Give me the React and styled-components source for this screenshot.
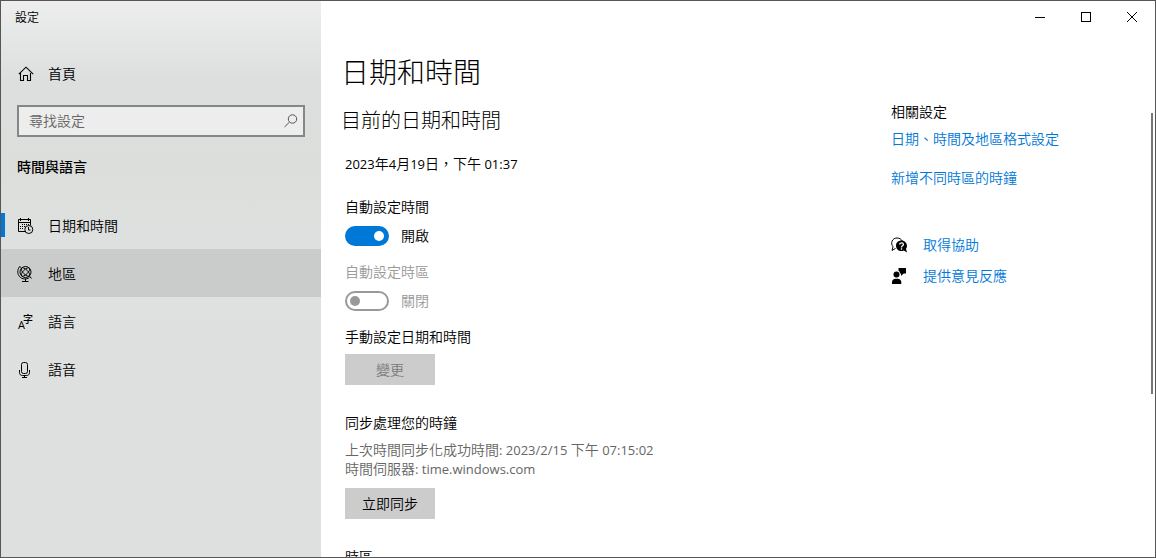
import React from "react";
import styled, { createGlobalStyle } from "styled-components";

const GlobalStyle = createGlobalStyle`
  *, *::before, *::after { box-sizing: border-box; }
  body {
    margin: 0;
    background: #fff;
    color: #000;
    font-family: "Open Sans", "Noto Sans CJK TC", sans-serif;
    font-size: 14px;
    line-height: 20px;
    font-weight: 350;
  }
  h1, h2, h3, p { margin: 0; font-weight: inherit; }
  button, input { font: inherit; color: inherit; }
  a { color: inherit; text-decoration: none; }
`;

const Window = styled.div`
  display: flex;
  height: 100vh;
  overflow: hidden;
  border: 1px solid #565656;
`;

const Sidebar = styled.aside`
  flex: 0 0 320px;
  background: linear-gradient(#eeeeee 0, #e6e7e7 32px, #dddfde 80px, #dcdedc 170px, #dfe1e0 260px, #dee0df 100%);
`;

const AppTitle = styled.div`
  padding: 7px 14px;
  height: 32px;
  font-size: 12px;
`;

const SidebarLink = styled.a`
  position: relative;
  display: flex;
  align-items: center;
  gap: 15px;
  height: 48px;
  padding: 1px 0 0 16px;
  background: ${(p) => (p.$hovered ? "rgba(0, 0, 0, 0.09)" : "transparent")};

  &::before {
    content: "";
    position: absolute;
    top: 12px;
    left: 0;
    width: 4px;
    height: 24px;
    background: ${(p) => (p.$current ? "#0078d7" : "transparent")};
  }
`;

const HomeRow = styled.div`
  margin-top: 16px;
`;

const SearchBox = styled.label`
  display: flex;
  align-items: center;
  height: 32px;
  margin: 8px 16px 20px;
  padding: 0 4px 0 10px;
  border: 2px solid #858686;
  background: #ededed;
`;

const SearchInput = styled.input`
  flex: 1;
  min-width: 0;
  padding: 0;
  border: 0;
  outline: 0;
  background: transparent;
  &::placeholder { color: #666; opacity: 1; }
`;

const SectionName = styled.h2`
  padding: 0 16px;
  margin-bottom: 24px;
  font-size: 14px;
  font-weight: 500;
`;

const Main = styled.main`
  position: relative;
  flex: 1;
  min-width: 0;
  overflow: hidden;
`;

const WindowControls = styled.div`
  display: flex;
  justify-content: flex-end;
  height: 32px;
`;

const WindowButton = styled.button`
  display: grid;
  place-items: center;
  width: 46px;
  padding: 0;
  border: 0;
  background: transparent;
`;

const Columns = styled.div`
  display: flex;
  padding-left: 24px;
`;

const Settings = styled.div`
  flex: 1;
  min-width: 0;
`;

const PageTitle = styled.h1`
  margin: 19px 0 15px -4px;
  font-size: 28px;
  line-height: 40px;
  font-weight: 300;
`;

const GroupTitle = styled.h2`
  margin: 0 0 19px -4px;
  font-size: 20px;
  line-height: 28px;
  font-weight: 300;
`;

const Latin = styled.span`
  font-size: 13px;
  line-height: 1;
  font-weight: 400;
`;

const Field = styled.div`
  margin-top: ${(p) => p.$gap}px;
`;

const FieldLabel = styled.label`
  display: block;
  margin-bottom: 9px;
  color: ${(p) => (p.$disabled ? "#999" : "#000")};
`;

const FieldTitle = styled.h3`
  margin-bottom: 7px;
  font-size: 14px;
`;

const ToggleRow = styled.div`
  display: flex;
  align-items: center;
  gap: 12px;
  color: ${(p) => (p.$disabled ? "#999" : "#000")};
`;

const Toggle = styled.input`
  appearance: none;
  display: flex;
  align-items: center;
  width: 44px;
  height: 20px;
  margin: 0;
  padding: 0 3px;
  border: 2px solid #0078d7;
  border-radius: 10px;
  background: #0078d7;

  &::before {
    content: "";
    width: 10px;
    height: 10px;
    margin-left: auto;
    border-radius: 50%;
    background: #fff;
  }
  &:not(:checked) {
    border-color: #999;
    background: #fff;
  }
  &:not(:checked)::before {
    margin-left: 0;
    background: #999;
  }
`;

const PushButton = styled.button`
  display: block;
  width: 90px;
  height: 31px;
  padding: 0;
  border: 0;
  background: #ccc;
  &:disabled { color: #7a7a7a; }
`;

const SyncInfo = styled.p`
  margin-bottom: 10px;
  line-height: 19px;
  color: #666;
`;

const Related = styled.aside`
  flex: 0 0 264px;
  padding-top: 69px;
`;

const RelatedTitle = styled.h3`
  margin-bottom: 7px;
  font-size: 14px;
`;

const RelatedLink = styled.a`
  display: block;
  margin-bottom: 19px;
  color: #0078d7;
`;

const SupportLinks = styled.div`
  display: grid;
  gap: 11px;
  margin-top: 47px;
`;

const SupportLink = styled.a`
  display: flex;
  align-items: center;
  gap: 16px;
  color: #0078d7;
  svg { color: #000; }
`;

const ScrollThumb = styled.div`
  position: absolute;
  top: 112px;
  right: 2px;
  width: 2px;
  height: 50.4vh;
  background: #767676;
`;

const Svg = styled.svg`
  display: block;
  flex: none;
  overflow: visible;
`;

const Icon = ({ children, size = 16 }) => (
  <Svg width={size} height={size} viewBox={`0 0 ${size} ${size}`} fill="none" stroke="currentColor" aria-hidden="true">
    {children}
  </Svg>
);

const HomeIcon = () => (
  <Icon>
    <path d="M1.8 8.2 9 1.2l7.2 7M3.5 7v7.500h3V9.500h4v5h3V7" strokeWidth="1.1" />
  </Icon>
);

const SearchIcon = () => (
  <Icon>
    <circle cx="9.5" cy="6" r="4.2" stroke="#555" />
    <path d="M6.4 9.2 1.5 14" stroke="#555" />
  </Icon>
);

const CalendarIcon = () => (
  <Icon>
    <path d="M8 13.5H1.5v-12h12v6M1.5 4.5h12M3.5 0v3M11.500 0v3" />
    <path d="M5 6.5h1M7 6.500h1M9 6.500h1M11 6.500h1M3 8.500h1M5 8.500h1M7 8.500h1M3 10.500h1M5 10.500h1" />
    <circle cx="11.800" cy="11.500" r="4" />
    <path d="M11.5 9v3h2" />
  </Icon>
);

const GlobeIcon = () => (
  <Icon>
    <circle cx="8.5" cy="6" r="5.500" />
    <g strokeWidth="0.900" transform="rotate(-45 8.500 6)">
      <ellipse cx="8.500" cy="6" rx="2.300" ry="5.500" />
      <ellipse cx="8.500" cy="6" rx="5.500" ry="2.300" />
    </g>
    <path d="M2.500 0 4 1.800M2.300 1C.2 4 .3 8.300 2.800 10.800s6.400 3 9.600.800M12.300 9.800l2.200 2.700M8.500 12.500v3M5 15.500h6.500" />
  </Icon>
);

const LanguageIcon = () => (
  <Icon>
    <g fill="currentColor" stroke="none" fontWeight="500">
      <text x="1" y="15" fontSize="11">A</text>
      <text x="6" y="9" fontSize="10">字</text>
    </g>
  </Icon>
);

const MicIcon = () => (
  <Icon>
    <rect x="4.5" y="0.5" width="6" height="11" rx="2" />
    <path d="M2.5 8v2.500c0 2 1.2 3 3 3h4c1.8 0 3-1 3-3V8M7.5 13.5v2M5 15.5h5" />
  </Icon>
);

const HelpIcon = () => (
  <Icon>
    <path d="M4.6 11.4 1 13.4l1-3.6C-.8 6.4 1 1 6 1c2.6 0 4.4 1.2 5.2 3" />
    <path d="M10.5 3.500C7.200 3.500 5 5.700 5 8.700s2.200 5.300 5.500 5.300c.9 0 1.600-.1 2.300-.5L16 15.500l-1-3.700c.6-.8 1-1.700 1-2.800 0-3-2.200-5.500-5.500-5.500z" fill="currentColor" stroke="none" />
    <path d="M8.700 7.500c0-2.200 3.700-2.200 3.700 0 0 1.400-1.900 1.300-1.900 2.900M10.500 11.300v1.400" stroke="#fff" strokeWidth="1.300" />
  </Icon>
);

const FeedbackIcon = () => (
  <Icon>
    <g fill="currentColor" stroke="none">
      <circle cx="5.500" cy="6.500" r="3" />
      <path d="M1 16v-2c0-2 1.600-3.300 3.500-3.300h2.200c2 0 3.600 1.300 3.600 3.300v2zM7.500 0H15v5.500h-2.300L10 8V5.500H9C9 4 8.500 3.400 7.500 2.800z" />
    </g>
  </Icon>
);

const navItems = [
  { label: "日期和時間", icon: CalendarIcon, current: true },
  { label: "地區", icon: GlobeIcon, hovered: true },
  { label: "語言", icon: LanguageIcon },
  { label: "語音", icon: MicIcon },
];

export default function App() {
  return (
    <>
      <GlobalStyle />
      <Window>
        <Sidebar>
          <AppTitle>設定</AppTitle>
          <HomeRow>
            <SidebarLink href="#home"><HomeIcon />首頁</SidebarLink>
          </HomeRow>
          <SearchBox>
            <SearchInput type="text" placeholder="尋找設定" aria-label="尋找設定" />
            <SearchIcon />
          </SearchBox>
          <SectionName>時間與語言</SectionName>
          <nav>
            {navItems.map(({ label, icon: ItemIcon, current, hovered }) => (
              <SidebarLink
                key={label}
                href={`#${label}`}
                $current={current}
                $hovered={hovered}
                aria-current={current ? "page" : undefined}
              >
                <ItemIcon />
                {label}
              </SidebarLink>
            ))}
          </nav>
        </Sidebar>

        <Main>
          <WindowControls>
            <WindowButton aria-label="最小化">
              <Icon size={12}><path d="M1 6.500h10" /></Icon>
            </WindowButton>
            <WindowButton aria-label="最大化">
              <Icon size={12}><rect x="1.500" y="1.500" width="9" height="9" /></Icon>
            </WindowButton>
            <WindowButton aria-label="關閉">
              <Icon size={12}><path d="m1 1 10 10M11 1 1 11" /></Icon>
            </WindowButton>
          </WindowControls>

          <Columns>
            <Settings>
              <PageTitle>日期和時間</PageTitle>
              <GroupTitle>目前的日期和時間</GroupTitle>
              <p>
                <Latin>2023</Latin>年<Latin>4</Latin>月<Latin>19</Latin>日，下午<Latin> 01:37</Latin>
              </p>

              <Field $gap={23}>
                <FieldLabel htmlFor="auto-time">自動設定時間</FieldLabel>
                <ToggleRow>
                  <Toggle id="auto-time" type="checkbox" role="switch" defaultChecked />
                  開啟
                </ToggleRow>
              </Field>

              <Field $gap={16}>
                <FieldLabel htmlFor="auto-zone" $disabled>自動設定時區</FieldLabel>
                <ToggleRow $disabled>
                  <Toggle id="auto-zone" type="checkbox" role="switch" disabled />
                  關閉
                </ToggleRow>
              </Field>

              <Field $gap={16}>
                <FieldTitle>手動設定日期和時間</FieldTitle>
                <PushButton disabled>變更</PushButton>
              </Field>

              <Field $gap={28}>
                <FieldTitle>同步處理您的時鐘</FieldTitle>
                <SyncInfo>
                  上次時間同步化成功時間<Latin>: 2023/2/15 </Latin>下午<Latin> 07:15:02</Latin>
                  <br />
                  時間伺服器<Latin>: time.windows.com</Latin>
                </SyncInfo>
                <PushButton>立即同步</PushButton>
              </Field>

              <Field $gap={28}>
                <FieldTitle>時區</FieldTitle>
              </Field>
            </Settings>

            <Related>
              <RelatedTitle>相關設定</RelatedTitle>
              <RelatedLink href="#formats">日期、時間及地區格式設定</RelatedLink>
              <RelatedLink href="#clocks">新增不同時區的時鐘</RelatedLink>
              <SupportLinks>
                <SupportLink href="#help"><HelpIcon />取得協助</SupportLink>
                <SupportLink href="#feedback"><FeedbackIcon />提供意見反應</SupportLink>
              </SupportLinks>
            </Related>
          </Columns>
          <ScrollThumb />
        </Main>
      </Window>
    </>
  );
}
